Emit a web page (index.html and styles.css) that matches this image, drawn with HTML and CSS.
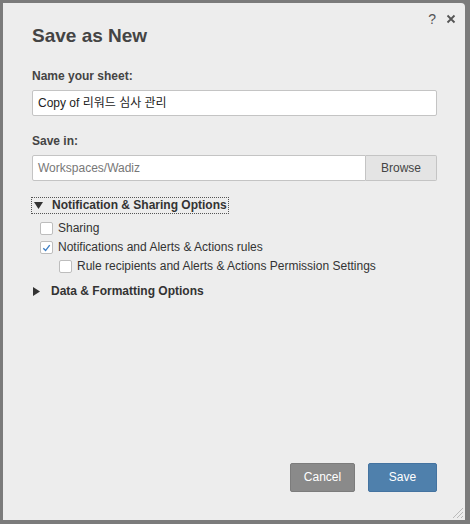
FILE: index.html
```html
<!DOCTYPE html>
<html>
<head>
<meta charset="utf-8">
<link rel="stylesheet" href="styles.css">
</head>
<body>
<div class="backdrop">
  <div class="dialog">
    <div class="topicons">
      <span class="help">?</span>
      <svg class="close" width="10" height="10" viewBox="0 0 10 10"><path d="M1.5 1.5 L8.5 8.5 M8.5 1.5 L1.5 8.5" stroke="#555" stroke-width="1.8" fill="none"/></svg>
    </div>
    <h1 class="title">Save as New</h1>
    <label class="label">Name your sheet:</label>
    <div class="input name-input">Copy of 리워드 심사 관리</div>
    <label class="label label-save">Save in:</label>
    <div class="path-row">
      <div class="input path-input">Workspaces/Wadiz</div>
      <div class="browse">Browse</div>
    </div>
    <div class="section">
      <div class="section-head focused">
        <svg class="tri" width="9" height="8" viewBox="0 0 9 8"><path d="M0 0 H9 L4.5 7 Z" fill="#333"/></svg>
        <span>Notification &amp; Sharing Options</span>
      </div>
      <div class="opts">
        <div class="opt"><span class="cb"></span><span>Sharing</span></div>
        <div class="opt"><span class="cb"><svg width="12" height="12" viewBox="0 0 12 12"><path d="M2.5 6.3 L5 8.8 L9.5 2.8" stroke="#3d7ec4" stroke-width="1.5" fill="none"/></svg></span><span>Notifications and Alerts &amp; Actions rules</span></div>
        <div class="opt sub"><span class="cb"></span><span>Rule recipients and Alerts &amp; Actions Permission Settings</span></div>
      </div>
      <div class="section-head collapsed">
        <svg class="tri" width="8" height="9" viewBox="0 0 8 9"><path d="M0 0 V9 L7 4.5 Z" fill="#333"/></svg>
        <span>Data &amp; Formatting Options</span>
      </div>
    </div>
    <div class="spacer"></div>
    <div class="buttons">
      <div class="btn cancel">Cancel</div>
      <div class="btn save">Save</div>
    </div>
    <svg class="grip" width="14" height="14" viewBox="0 0 14 14"><path d="M13 3 L3 13 M13 7 L7 13 M13 11 L11 13" stroke="#bbb" stroke-width="1"/></svg>
  </div>
</div>
</body>
</html>
```
FILE: styles.css
```css
html, body {
  margin: 0;
  padding: 0;
}
body {
  width: 470px;
  height: 524px;
  overflow: hidden;
  background: #7b7b7b;
  font-family: "Liberation Sans", "Noto Sans CJK KR", Arial, sans-serif;
  color: #333;
}
.backdrop {
  padding: 3px 0 0 3px;
}
.dialog {
  position: relative;
  box-sizing: border-box;
  width: 462px;
  height: 517px;
  background: #ededed;
  border-radius: 0 4px 0 0;
  padding: 19px 28px 28px 29px;
  display: flex;
  flex-direction: column;
}
.topicons {
  position: absolute;
  top: 9px;
  right: 9px;
  display: flex;
  align-items: center;
  gap: 10px;
}
.help {
  font-size: 14px;
  color: #555;
  line-height: 14px;
}
.title {
  margin: 0;
  font-size: 19px;
  font-weight: bold;
  line-height: 28px;
  color: #444;
}
.label {
  display: block;
  font-size: 12px;
  font-weight: bold;
  color: #444;
  margin-top: 18px;
  line-height: 16px;
}
.label-save {
  margin-top: 17px;
}
.input {
  box-sizing: border-box;
  height: 26px;
  background: #fff;
  border: 1px solid #c4c4c4;
  border-radius: 2px;
  font-size: 12px;
  line-height: 24px;
  padding: 0 5px;
  color: #222;
  margin-top: 6px;
}
.path-row {
  display: flex;
  margin-top: 6px;
}
.path-input {
  flex: 1;
  margin-top: 0;
  color: #777;
  border-radius: 2px 0 0 2px;
}
.browse {
  box-sizing: border-box;
  width: 71px;
  height: 26px;
  background: #e4e4e4;
  border: 1px solid #c4c4c4;
  border-left: none;
  border-radius: 0 2px 2px 0;
  font-size: 12px;
  line-height: 24px;
  text-align: center;
  color: #444;
}
.section {
  margin-top: 17px;
}
.section-head {
  display: flex;
  align-items: center;
  font-size: 12px;
  font-weight: bold;
  color: #333;
  line-height: 15px;
}
.section-head .tri {
  margin-left: 2px;
  margin-right: 9px;
}
.focused {
  outline: 1px dotted #555;
  width: max-content;
  padding-right: 1px;
}
.collapsed .tri {
  margin-left: 1px;
  margin-right: 10px;
}
.opts {
  margin-top: 9px;
  margin-bottom: 11px;
  padding-left: 8px;
  display: flex;
  flex-direction: column;
  gap: 6px;
}
.opt {
  display: flex;
  align-items: center;
  font-size: 12px;
  color: #333;
  line-height: 13px;
}
.opt.sub {
  padding-left: 19px;
}
.cb {
  box-sizing: border-box;
  width: 13px;
  height: 13px;
  background: #fff;
  border: 1px solid #bdbdbd;
  border-radius: 2px;
  margin-right: 5px;
  display: flex;
  align-items: center;
  justify-content: center;
}
.cb svg {
  display: block;
}
.spacer {
  flex: 1;
}
.buttons {
  display: flex;
  justify-content: flex-end;
  gap: 13px;
}
.btn {
  box-sizing: border-box;
  height: 29px;
  border-radius: 2px;
  color: #fff;
  font-size: 12px;
  line-height: 27px;
  text-align: center;
}
.cancel {
  width: 65px;
  background: #8a8a8a;
  border: 1px solid #7c7c7c;
}
.save {
  width: 69px;
  background: #4f80ac;
  border: 1px solid #4473a0;
}
.grip {
  position: absolute;
  right: 1px;
  bottom: 1px;
}
```
